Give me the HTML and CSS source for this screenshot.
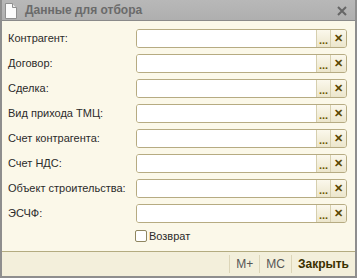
FILE: index.html
```html
<html lang="ru">
<head>
  <meta charset="UTF-8" />
  <title>Данные для отбора</title>
  <link rel="stylesheet" href="styles.css">
</head>
<body>
  <div class="window">
    <div class="titlebar">
      <svg class="title-icon" width="13" height="16" viewBox="0 0 13 16">
        <path d="M1.5 0.5 H8.5 L12.5 4.5 V15.5 H1.5 Z" fill="#fbfbfb" stroke="#8f8f8f"/>
        <path d="M8.5 0.5 V4.5 H12.5" fill="#e6e6e6" stroke="#8f8f8f"/>
      </svg>
      <span class="title">Данные для отбора</span>
      <svg class="close" width="10" height="10" viewBox="0 0 10 10">
        <path d="M1 1 L9 9 M9 1 L1 9" stroke="#666" stroke-width="2"/>
      </svg>
    </div>

    <div class="content">
      <div class="form">
        <label>Контрагент:</label>
        <div class="field"><div class="field-input"></div><span class="btn-dots">...</span><span class="btn-clear">✕</span></div>

        <label>Договор:</label>
        <div class="field"><div class="field-input"></div><span class="btn-dots">...</span><span class="btn-clear">✕</span></div>

        <label>Сделка:</label>
        <div class="field"><div class="field-input"></div><span class="btn-dots">...</span><span class="btn-clear">✕</span></div>

        <label>Вид прихода ТМЦ:</label>
        <div class="field"><div class="field-input"></div><span class="btn-dots">...</span><span class="btn-clear">✕</span></div>

        <label>Счет контрагента:</label>
        <div class="field"><div class="field-input"></div><span class="btn-dots">...</span><span class="btn-clear">✕</span></div>

        <label>Счет НДС:</label>
        <div class="field"><div class="field-input"></div><span class="btn-dots">...</span><span class="btn-clear">✕</span></div>

        <label>Объект строительства:</label>
        <div class="field"><div class="field-input"></div><span class="btn-dots">...</span><span class="btn-clear">✕</span></div>

        <label>ЭСЧФ:</label>
        <div class="field"><div class="field-input"></div><span class="btn-dots">...</span><span class="btn-clear">✕</span></div>

        <span></span>
        <div class="check-row"><span class="checkbox"></span><span>Возврат</span></div>
      </div>
    </div>

    <div class="footer">
      <span class="foot-btn">M+</span>
      <span class="foot-btn">МС</span>
      <span class="foot-btn close-btn">Закрыть</span>
    </div>
  </div>
</body>
</html>
```

FILE: styles.css
```css
body {
  margin: 0;
  padding: 0;
  font-family: 'Liberation Sans', Arial, sans-serif;
  font-size: 11px;
  color: #2b2b2b;
  background: #fff;
}

.window {
  width: 357px;
  height: 278px;
  box-sizing: border-box;
  border: 2px solid #8e8e8e;
  border-top: none;
  display: flex;
  flex-direction: column;
  background-color: #fbf8e9;
}

.titlebar {
  height: 20px;
  background: linear-gradient(#b8b8b8, #afafaf);
  border-bottom: 1px solid #8a8a8a;
  display: flex;
  align-items: center;
  padding: 0 8px 0 2px;
}

.title-icon {
  margin-right: 8px;
  margin-top: 1px;
}

.title {
  flex: 1;
  font-weight: bold;
  font-size: 12px;
  color: #6a6a6a;
}

.close {
  margin-top: 1px;
}

.content {
  flex: 1;
  padding: 8px 8px 0 6px;
}

.form {
  display: grid;
  grid-template-columns: 128px 1fr;
  row-gap: 6px;
  align-items: center;
}

label {
  display: block;
  line-height: 19px;
  white-space: nowrap;
}

.field {
  height: 19px;
  box-sizing: border-box;
  border: 1px solid #b6ab82;
  border-radius: 3px;
  display: flex;
  overflow: hidden;
}

.field-input {
  flex: 1;
  background: #fff;
}

.btn-dots,
.btn-clear {
  background: linear-gradient(#fbf8ec, #ece6cc);
  display: flex;
  align-items: center;
  justify-content: center;
  color: #6b5800;
  font-weight: bold;
}

.btn-dots {
  width: 14px;
  border-left: 1px solid #d6cfae;
  font-size: 11px;
  line-height: 11px;
  padding-top: 4px;
  box-sizing: border-box;
}

.btn-clear {
  width: 15px;
  border-left: 1px solid #d6cfae;
  font-size: 11px;
  color: #5a4800;
}

.check-row {
  display: flex;
  align-items: center;
  height: 13px;
  margin-left: -1px;
}

.checkbox {
  width: 12px;
  height: 12px;
  box-sizing: border-box;
  border: 1px solid #8f8660;
  border-radius: 2px;
  background: #fff;
  margin-right: 2px;
}

.footer {
  height: 24px;
  border-top: 1px solid #b3ab80;
  background-color: #f3efdb;
  display: flex;
  justify-content: flex-end;
  align-items: center;
  padding-right: 2px;
}

.foot-btn {
  border-left: 1px solid #dcd5b8;
  height: 18px;
  line-height: 18px;
  padding: 0 6px 0 6px;
  color: #555;
  font-size: 12px;
}

.close-btn {
  font-weight: bold;
  color: #3a3000;
  padding-left: 6px;
  padding-right: 4px;
}
```
